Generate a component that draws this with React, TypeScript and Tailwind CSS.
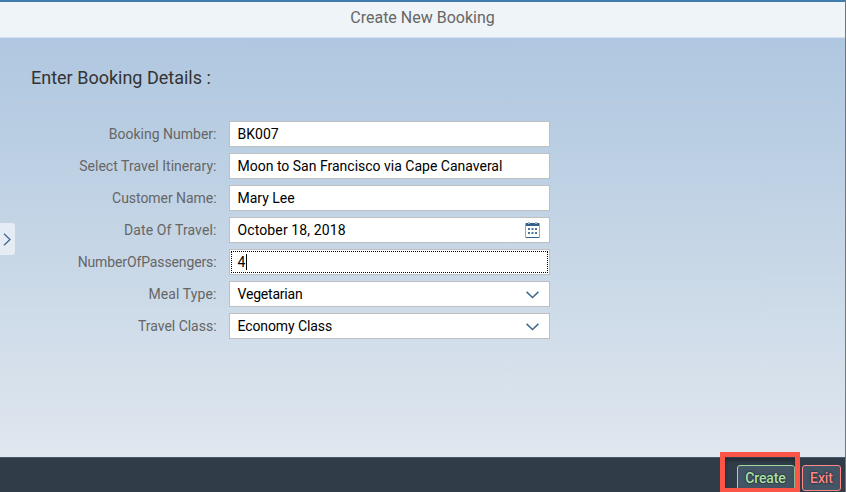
import type { ReactNode } from "react";

type Field = {
  label: string;
  value: string;
  labelStyle: string;
  valueStyle: string;
  kind?: "date" | "select" | "focus";
};

const fields: Field[] = [
  { label: "Booking Number:", value: "BK007", labelStyle: "tracking-[0px]", valueStyle: "tracking-[0px]" },
  { label: "Select Travel Itinerary:", value: "Moon to San Francisco via Cape Canaveral", labelStyle: "tracking-[0.04px]", valueStyle: "tracking-[0px]" },
  { label: "Customer Name:", value: "Mary Lee", labelStyle: "tracking-[-0.05px]", valueStyle: "tracking-[0px]" },
  { label: "Date Of Travel:", value: "October 18, 2018", labelStyle: "tracking-[0.12px]", valueStyle: "tracking-[0.12px]", kind: "date" },
  { label: "NumberOfPassengers:", value: "4", labelStyle: "tracking-[-0.12px]", valueStyle: "tracking-[0px]", kind: "focus" },
  { label: "Meal Type:", value: "Vegetarian", labelStyle: "tracking-[0.1px]", valueStyle: "tracking-[-0.2px]", kind: "select" },
  { label: "Travel Class:", value: "Economy Class", labelStyle: "tracking-[-0.02px]", valueStyle: "tracking-[-0.1px]", kind: "select" },
];

function CalendarIcon() {
  return (
    <svg className="mr-2 h-4 w-[15px] shrink-0" viewBox="0 0 15 16">
      <rect x="0" y="1" width="15" height="15" rx="1" fill="#8fa9c1" />
      <rect x="1" y="4" width="13" height="11" fill="#fff" />
      <path d="M1 1h13v3H1zM1 15h13v1H1z" fill="#346187" />
      <path d="M3 0h2v2H3zM10 0h2v2h-2z" fill="#9fb5c9" />
      <path d="M3 6h2v2H3zM6.5 6h2v2h-2zM10 6h2v2h-2zM3 10h2v2H3zM6.5 10h2v2h-2zM10 10h2v2h-2z" fill="#4f7697" />
    </svg>
  );
}

function ChevronDown() {
  return (
    <svg className="mt-px mr-[9px] h-2 w-[13px] shrink-0" viewBox="0 0 13 8" fill="none" stroke="#3d688f" strokeWidth="1.5">
      <path d="M.6 .9 6.5 6.5 12.4 .9" />
    </svg>
  );
}

function Row({ field }: { field: Field }) {
  let trailing: ReactNode = null;
  if (field.kind === "date") trailing = <CalendarIcon />;
  if (field.kind === "select") trailing = <ChevronDown />;
  const focused = field.kind === "focus";
  return (
    <div className="flex h-[26px] items-center">
      <div className={`w-[216.5px] shrink-0 text-right text-[14px] leading-[26px] whitespace-nowrap text-[#666] ${field.labelStyle}`}>
        {field.label}
      </div>
      <div className="ml-[12.5px] flex h-[26px] w-[321px] border border-[#bfbfbf] bg-white p-px">
        <div className={`flex flex-1 items-center justify-between ${focused ? "border border-dotted border-black pl-[5.5px]" : "pl-[6.5px]"}`}>
          <div className="flex items-center">
            <span className={`text-[14px] leading-[22px] whitespace-nowrap text-black ${field.valueStyle}`}>{field.value}</span>
            {focused && <span className="ml-[0.6px] h-4 w-px bg-black" />}
          </div>
          {trailing}
        </div>
      </div>
    </div>
  );
}

export default function App() {
  return (
    <div className="relative flex h-[492px] w-[846px] flex-col overflow-hidden border-r border-[#70777d] bg-[#303c48] font-[Roboto,'Liberation_Sans',sans-serif]">
      <header className="flex h-[38px] shrink-0 justify-center border-t-2 border-b border-t-[#427cac] border-b-[#d3dfec] bg-[#eff4f8]">
        <h1 className="text-[16px] leading-[31px] text-[#666]">Create New Booking</h1>
      </header>

      <main className="flex h-[419px] shrink-0 flex-col bg-linear-to-b from-[#afc7e0] via-[#c6d6e6] to-[#e0e7ef]">
        <div className="mr-4 ml-4 h-[64px] border-b border-[#bfcad5] pt-[28px] pl-[15px]">
          <h2 className="text-[18px] leading-6 text-[#333]">Enter Booking Details :</h2>
        </div>
        <div className="mt-[19px] flex flex-col gap-1.5">
          {fields.map((field) => (
            <Row key={field.label} field={field} />
          ))}
        </div>
      </main>

      <footer className="flex h-[35px] shrink-0 justify-end border-t border-[#49596a] bg-[#303c48] pt-[7px] pr-1">
        <button className="mr-[7px] h-[26px] w-[58px] rounded-[3px] border border-[#9fd9a4] bg-[#445566] pr-px text-[14px] leading-6 font-medium tracking-[-0.1px] text-[#abe2ab] text-shadow-[0_0_2px_#000]">
          Create
        </button>
        <button className="h-[26px] w-[39px] rounded-[3px] border border-[#ff8888] bg-[#445566] text-[14px] leading-6 font-medium tracking-[-0.1px] text-[#ff8888] text-shadow-[0_0_2px_#000]">
          Exit
        </button>
      </footer>

      <div className="absolute top-[223px] left-0 flex h-8 w-[15px] items-center rounded-r-[3px] bg-[#e5ecf4] pl-[3px]">
        <svg className="h-[13px] w-2" viewBox="0 0 8 13" fill="none" stroke="#3d688f" strokeWidth="1.3">
          <path d="M1 .8 7 6.5 1 12.2" />
        </svg>
      </div>
      <div className="absolute top-[452px] left-[720px] h-10 w-20 border-5 border-b-4 border-[#fb5547] inset-shadow-[0_3px_4px_rgba(0,0,0,0.35)]" />
    </div>
  );
}
